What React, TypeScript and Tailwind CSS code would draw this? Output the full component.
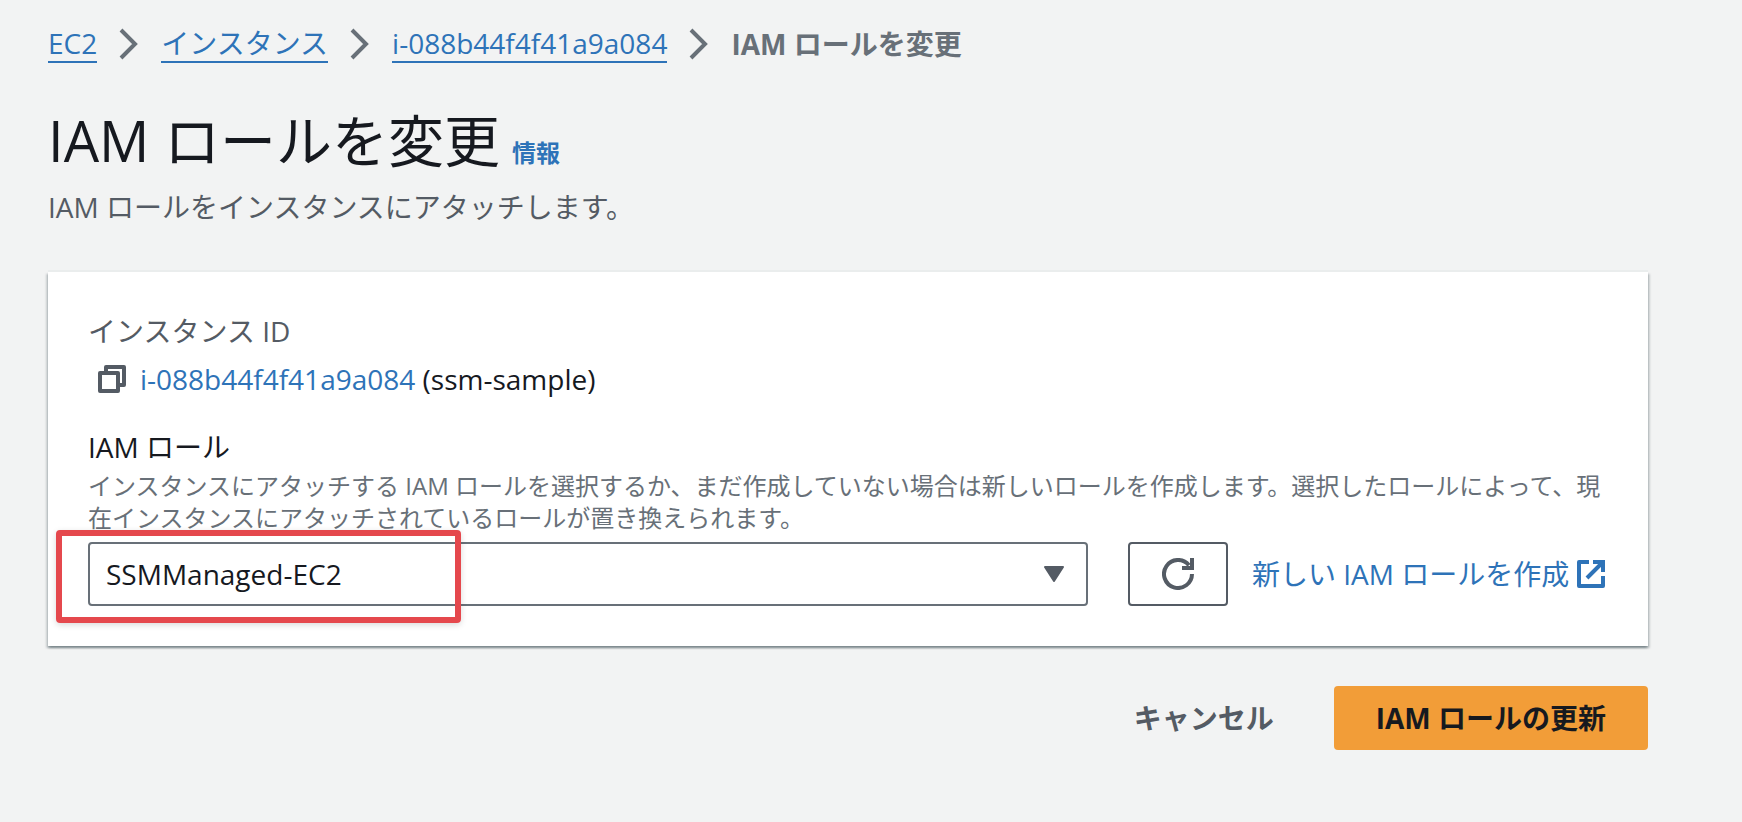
import type { ReactNode } from "react";

const crumbs = [
  { label: "EC2", href: "#ec2" },
  { label: "インスタンス", href: "#instances" },
  { label: "i-088b44f4f41a9a084", href: "#instance" },
];

function ChevronIcon() {
  return (
    <svg viewBox="0 0 32 32" className="size-8 shrink-0" fill="none" aria-hidden="true">
      <path d="M8 2l14 14L8 30" stroke="#687078" strokeWidth="4" />
    </svg>
  );
}

function CopyIcon() {
  return (
    <svg viewBox="0 0 32 32" className="size-8 shrink-0" fill="none" aria-hidden="true">
      <path d="M4 10h18v18H4z" stroke="#545b64" strokeWidth="4" strokeLinejoin="round" />
      <path d="M10 10V4h18v18h-6" stroke="#545b64" strokeWidth="4" strokeLinejoin="round" />
    </svg>
  );
}

function RefreshIcon() {
  return (
    <svg viewBox="0 0 32 32" className="size-8" fill="none" aria-hidden="true">
      <path d="M30 16a14 14 0 1 1-3-8.700" stroke="#545b64" strokeWidth="4" />
      <path d="M30 0v10H20" stroke="#545b64" strokeWidth="4" />
    </svg>
  );
}

function ExternalIcon() {
  return (
    <svg viewBox="0 0 28 28" className="size-7 shrink-0" fill="none" aria-hidden="true">
      <path d="M12 2H2v24h24V16" stroke="#2e73b8" strokeWidth="4" strokeLinejoin="round" />
      <path d="M16 2h10v10M25 3L10 18" stroke="#2e73b8" strokeWidth="4" />
    </svg>
  );
}

function TextLink({ href, children }: { href: string; children: ReactNode }) {
  return (
    <a href={href} className="text-[#2e73b8]">
      {children}
    </a>
  );
}

function Breadcrumbs() {
  return (
    <nav aria-label="Breadcrumbs">
      <ol className="flex items-center">
        {crumbs.map((c) => (
          <li key={c.label} className="flex items-center">
            <a
              href={c.href}
              className="border-b-2 border-[#2e73b8] leading-9 text-[#2e73b8]"
            >
              {c.label}
            </a>
            <span className="mx-4">
              <ChevronIcon />
            </span>
          </li>
        ))}
        <li className="font-bold text-[#687078]" aria-current="page">
          IAM ロールを変更
        </li>
      </ol>
    </nav>
  );
}

export default function App() {
  return (
    <main className="min-h-screen bg-[#f2f3f3] pt-6 pr-[94px] pb-12 pl-12 font-['Open_Sans','Noto_Sans_CJK_JP',sans-serif] text-[28px] leading-10 text-[#16191f]">
      <Breadcrumbs />

      <header className="mt-10">
        <div className="flex items-baseline gap-3">
          <h1 className="text-[56px] leading-[72px]">IAM ロールを変更</h1>
          <a href="#info" className="text-2xl font-bold text-[#2e73b8]">
            情報
          </a>
        </div>
        <p className="mt-[11px] text-[#545b64]">
          IAM ロールをインスタンスにアタッチします。
        </p>
      </header>

      <form onSubmit={(e) => e.preventDefault()}>
        <section className="mt-[45px] bg-white px-10 pt-[39px] pb-10 shadow-[0_-2px_0_0_#eaeded,0_2px_2px_0_rgba(0,28,36,0.3),2px_2px_2px_0_rgba(0,28,36,0.15),-2px_2px_2px_0_rgba(0,28,36,0.15)]">
          <div className="text-[#545b64]">インスタンス ID</div>
          <div className="mt-2 flex items-center gap-3 pl-2">
            <button type="button" aria-label="Copy">
              <CopyIcon />
            </button>
            <div>
              <TextLink href="#instance">i-088b44f4f41a9a084</TextLink> (ssm-sample)
            </div>
          </div>

          <label htmlFor="iam-role" className="mt-7 block">
            IAM ロール
          </label>
          <p id="iam-role-hint" className="mt-[3px] text-2xl leading-8 text-[#687078]">
            インスタンスにアタッチする IAM
            ロールを選択するか、まだ作成していない場合は新しいロールを作成します。選択したロールによって、現在インスタンスにアタッチされているロールが置き換えられます。
          </p>

          <div className="mt-2 flex items-center">
            <div className="relative flex-1">
              <select
                id="iam-role"
                aria-describedby="iam-role-hint"
                className="block h-16 w-full appearance-none rounded-sm border-2 border-[#687078] bg-white px-4"
              >
                <option>SSMManaged-EC2</option>
              </select>
              <svg
                viewBox="0 0 20 16"
                className="pointer-events-none absolute top-6 right-6 h-4 w-5"
                aria-hidden="true"
              >
                <path d="M1 1h18l-9 14z" fill="#545b64" stroke="#545b64" strokeWidth="2" strokeLinejoin="round" />
              </svg>
              {/* highlight around the selected role */}
              <div className="pointer-events-none absolute -top-3 -left-8 h-[93px] w-[405px] rounded-sm border-6 border-[#e5484d] shadow-[0_2px_6px_rgba(0,0,0,0.15)]" />
            </div>
            <button
              type="button"
              aria-label="Refresh"
              className="ml-10 flex h-16 w-[100px] items-center justify-center rounded-sm border-2 border-[#545b64]"
            >
              <RefreshIcon />
            </button>
            <a
              href="#create-role"
              className="ml-6 flex w-[356px] items-center gap-2 whitespace-nowrap text-[#2e73b8]"
            >
              新しい IAM ロールを作成
              <ExternalIcon />
            </a>
          </div>
        </section>

        <div className="mt-10 flex justify-end gap-4">
          <button type="button" className="h-16 px-11 font-bold text-[#545b64]">
            キャンセル
          </button>
          <button type="submit" className="h-16 rounded-sm bg-[#f29d38] px-[42px] font-bold">
            IAM ロールの更新
          </button>
        </div>
      </form>
    </main>
  );
}
